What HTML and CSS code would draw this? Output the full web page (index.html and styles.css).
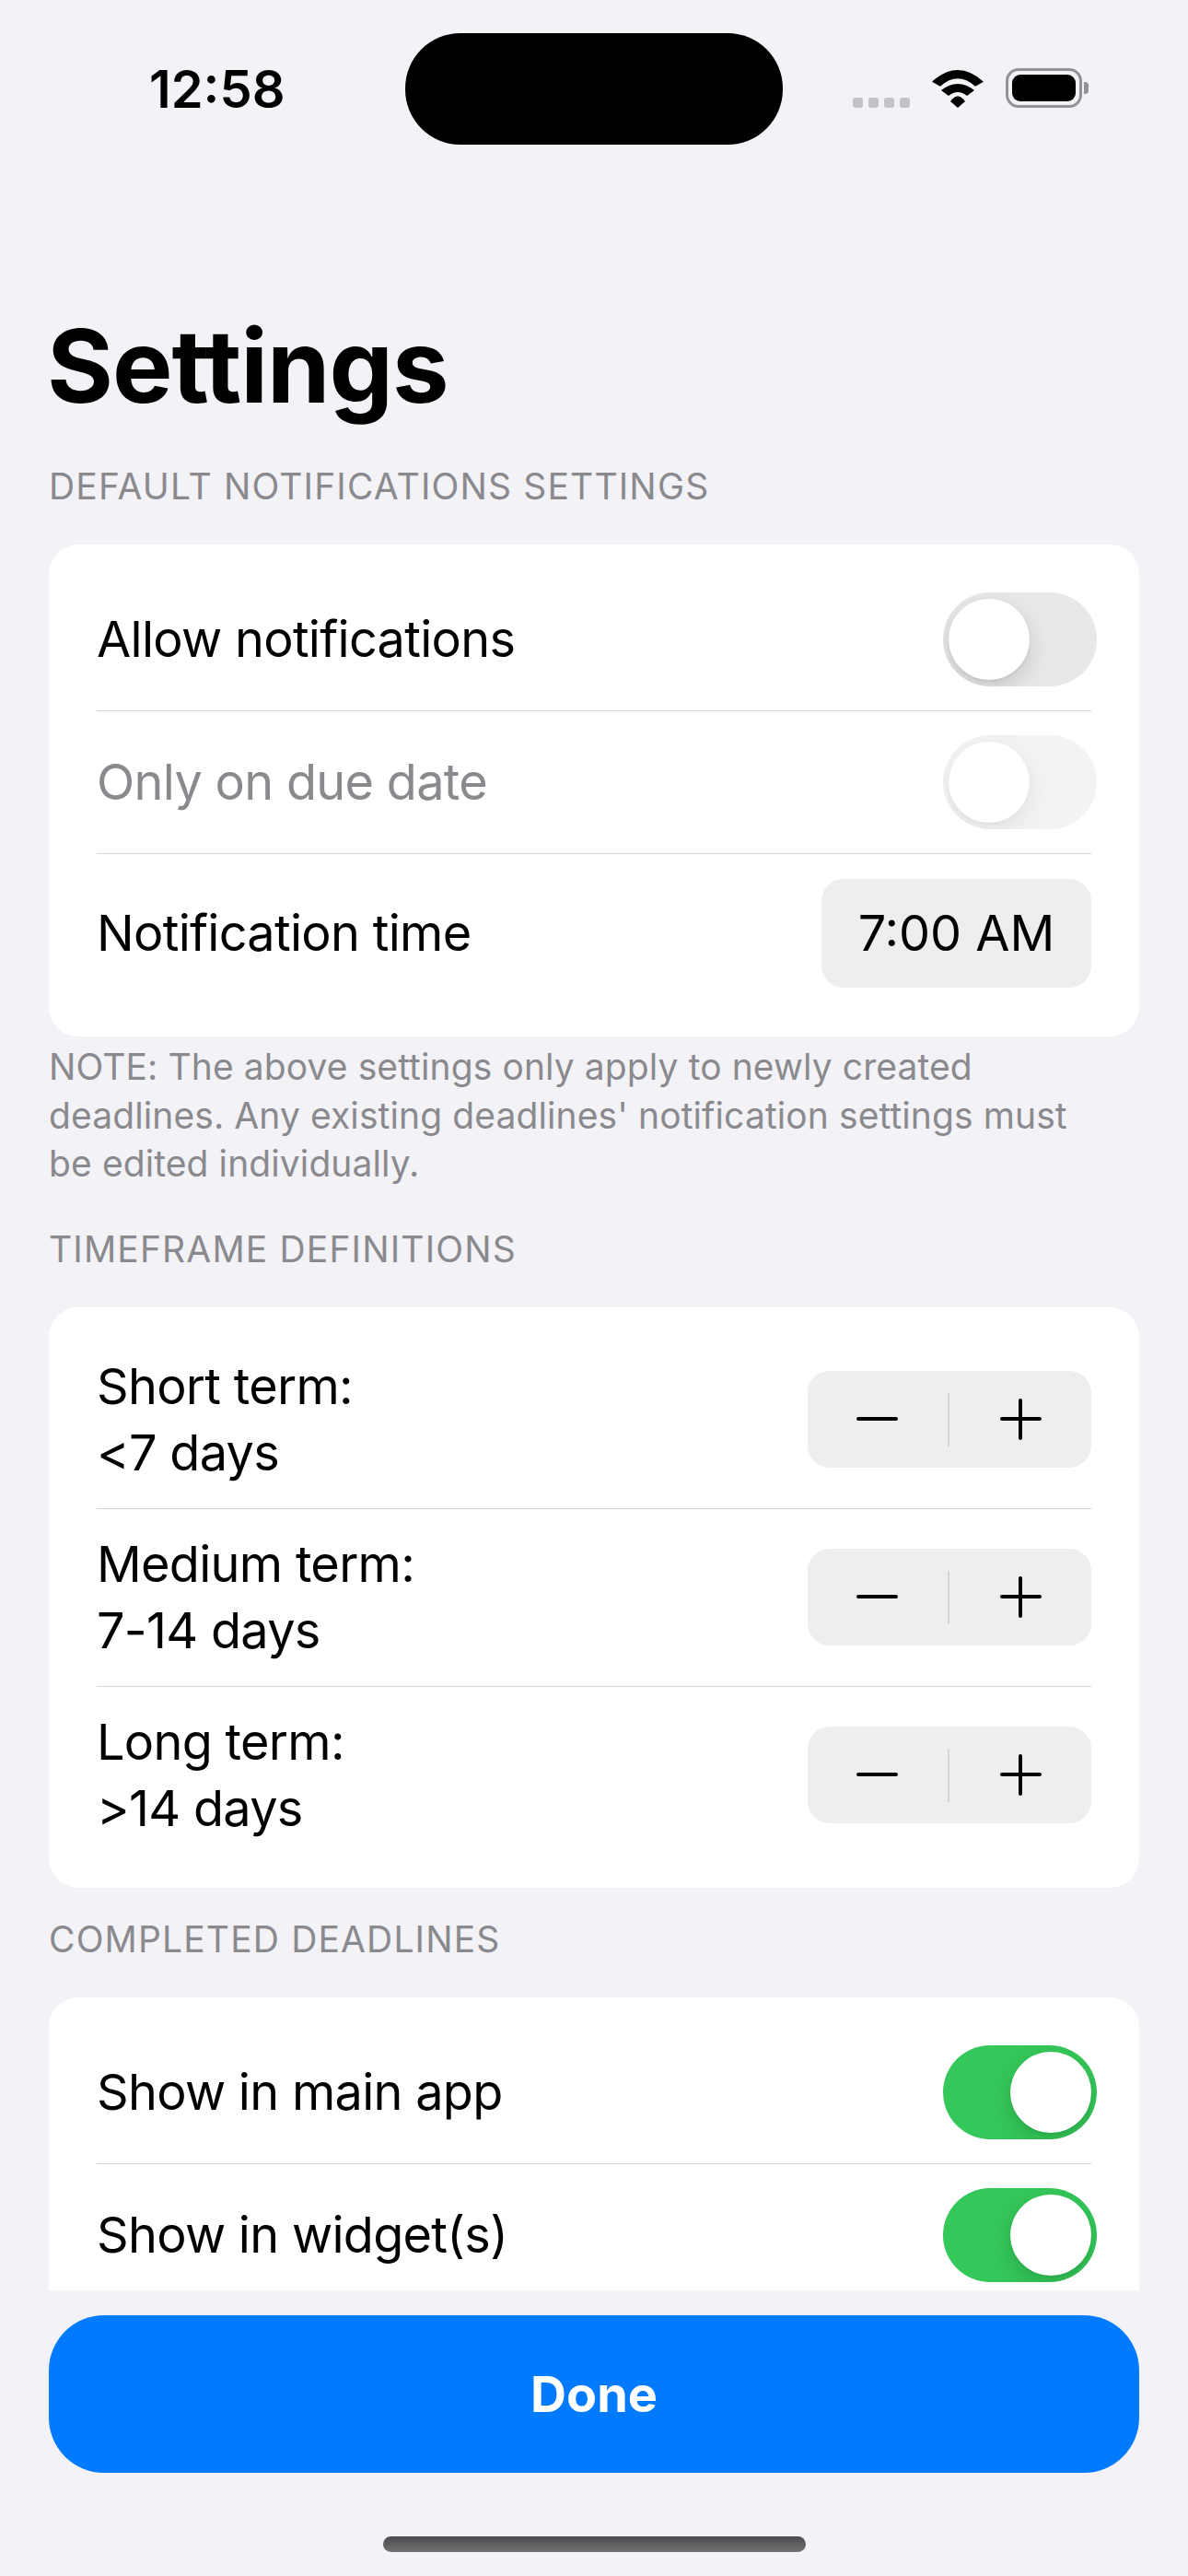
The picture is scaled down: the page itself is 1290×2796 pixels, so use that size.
FILE: index.html
```html
<!DOCTYPE html>
<html lang="en">

<head>
    <meta charset="UTF-8">
    <meta name="viewport" content="width=device-width, initial-scale=1.0">
    <title>Settings</title>
    <link rel="stylesheet" href="styles.css">
</head>

<body>
    <div class="phone">
        <div class="status-bar">
            <span class="time">12:58</span>
            <div class="island"></div>
            <div class="status-icons">
                <div class="signal"><i></i><i></i><i></i><i></i></div>
                <svg class="wifi" width="56" height="41" viewBox="0 0 56 41">
                    <path d="M0 12.7Q28 -12.7 56 12.7L47 17.7Q28 0.9 9 17.7Z" />
                    <path d="M10 22Q28 8 46 22L38 28Q28 20 18 28Z" />
                    <path d="M20 34Q28 23 36 34L28 41Z" />
                </svg>
                <div class="battery"><div class="battery-level"></div></div>
                <div class="battery-nub"></div>
            </div>
        </div>

        <main class="scroll">
            <h1>Settings</h1>

            <section>
                <h2>DEFAULT NOTIFICATIONS SETTINGS</h2>
                <div class="card">
                    <div class="row">
                        <span>Allow notifications</span>
                        <div class="toggle"><div class="thumb"></div></div>
                    </div>
                    <div class="row disabled">
                        <span>Only on due date</span>
                        <div class="toggle"><div class="thumb"></div></div>
                    </div>
                    <div class="row">
                        <span>Notification time</span>
                        <div class="time-btn">7:00 AM</div>
                    </div>
                </div>
                <p class="note">NOTE: The above settings only apply to newly created deadlines. Any existing deadlines' notification settings must be edited individually.</p>
            </section>

            <section>
                <h2>TIMEFRAME DEFINITIONS</h2>
                <div class="card">
                    <div class="row tall">
                        <span>Short term:<br>&lt;7 days</span>
                        <div class="stepper">
                            <div class="step"><div class="minus"></div></div>
                            <div class="step"><div class="plus"></div></div>
                        </div>
                    </div>
                    <div class="row tall">
                        <span>Medium term:<br>7-14 days</span>
                        <div class="stepper">
                            <div class="step"><div class="minus"></div></div>
                            <div class="step"><div class="plus"></div></div>
                        </div>
                    </div>
                    <div class="row tall">
                        <span>Long term:<br>&gt;14 days</span>
                        <div class="stepper">
                            <div class="step"><div class="minus"></div></div>
                            <div class="step"><div class="plus"></div></div>
                        </div>
                    </div>
                </div>
            </section>

            <section>
                <h2>COMPLETED DEADLINES</h2>
                <div class="card">
                    <div class="row">
                        <span>Show in main app</span>
                        <div class="toggle on"><div class="thumb"></div></div>
                    </div>
                    <div class="row">
                        <span>Show in widget(s)</span>
                        <div class="toggle on"><div class="thumb"></div></div>
                    </div>
                </div>
            </section>
        </main>

        <footer>
            <button type="button" class="done">Done</button>
            <div class="home-bar"></div>
        </footer>
    </div>
</body>

</html>
```

FILE: styles.css
```css
body {
    margin: 0;
    padding: 0;
    background-color: #f2f2f7;
    font-family: Inter, "Liberation Sans", sans-serif;
    color: #000;
}

.phone {
    width: 1290px;
    height: 2796px;
    display: flex;
    flex-direction: column;
    overflow: hidden;
}

/* status bar */
.status-bar {
    flex: none;
    display: flex;
    align-items: center;
    height: 121px;
    padding: 36px 0 0 162px;
}

.time {
    width: 278px;
    font-size: 56px;
    font-weight: 600;
}

.island {
    width: 410px;
    height: 121px;
    border-radius: 60px;
    background-color: #000;
}

.status-icons {
    display: flex;
    align-items: flex-end;
    margin-left: 76px;
    height: 43px;
    margin-top: -2px;
}

.signal {
    display: flex;
    gap: 6px;
    margin-right: 24px;
}

.signal i {
    display: block;
    width: 11px;
    height: 11px;
    border-radius: 3px;
    background-color: #c3c3c7;
}

.wifi {
    display: block;
    margin-right: 24px;
}

.battery {
    box-sizing: border-box;
    width: 83px;
    height: 43px;
    padding: 4px;
    border: 3px solid #939397;
    border-radius: 14px;
}

.battery-level {
    height: 100%;
    border-radius: 9px;
    background-color: #000;
}

.battery-nub {
    width: 5px;
    height: 13px;
    margin: 0 0 15px 2px;
    border-radius: 0 4px 4px 0;
    background-color: #939397;
}

/* content */
.scroll {
    flex: 1;
    min-height: 0;
    overflow: hidden;
    padding: 0 53px;
}

h1 {
    margin: 175px 0 40px -2px;
    font-size: 110px;
    line-height: 130px;
    font-weight: 700;
    letter-spacing: -1px;
}

section {
    margin-bottom: 30px;
}

h2 {
    margin: 0 0 37px;
    font-size: 39px;
    line-height: 52px;
    font-weight: 400;
    letter-spacing: 1.15px;
    color: #8a8a8e;
}

.card {
    padding: 26px 52px;
    background: white;
    border-radius: 32px;
}

.row {
    display: flex;
    align-items: center;
    justify-content: space-between;
    padding: 26px 0;
    border-bottom: 1px solid #d4d4d6;
    font-size: 54px;
    line-height: 72px;
    letter-spacing: -0.7px;
}

.row:last-child {
    border-bottom: none;
}

.row.tall {
    padding: 24px 0;
}

.row.disabled span {
    color: #8a8a8e;
}

.note {
    margin: 7px 0 40px;
    padding-right: 50px;
    font-size: 39px;
    line-height: 52.7px;
    letter-spacing: 0.1px;
    color: #8a8a8e;
}

/* toggles */
.toggle {
    box-sizing: border-box;
    display: flex;
    width: 167px;
    height: 102px;
    margin-right: -6px;
    padding: 7px 6px;
    border-radius: 51px;
    background-color: #e8e8ea;
    overflow: hidden;
}

.toggle.on {
    justify-content: flex-end;
    background-color: #34c759;
}

.row.disabled .toggle {
    opacity: 0.5;
}

.thumb {
    width: 88px;
    height: 88px;
    border-radius: 50%;
    background: white;
    box-shadow: 0 9px 24px rgba(0, 0, 0, 0.15), 0 2px 3px rgba(0, 0, 0, 0.06);
}

.time-btn {
    box-sizing: border-box;
    width: 293px;
    height: 118px;
    margin: 1px 0;
    border-radius: 24px;
    background-color: #eeeeef;
    font-size: 54px;
    line-height: 118px;
    letter-spacing: 0;
    text-align: center;
}

/* steppers */
.stepper {
    display: flex;
    width: 308px;
    height: 105px;
    margin-top: -2px;
    border-radius: 24px;
    background-color: #eeeeef;
}

.step {
    flex: 1;
    display: flex;
    align-items: center;
    justify-content: center;
}

.step:first-child {
    position: relative;
}

.step:first-child::after {
    content: "";
    position: absolute;
    right: 0;
    top: 24px;
    height: 58px;
    border-right: 2px solid #d6d6d8;
}

.minus,
.plus {
    position: relative;
    width: 45px;
    height: 4px;
    background-color: #000;
    border-radius: 2px;
}

.minus {
    margin-right: 3px;
}

.plus::after {
    content: "";
    position: absolute;
    left: 20.5px;
    top: -20.5px;
    width: 4px;
    height: 45px;
    background-color: #000;
    border-radius: 2px;
}

/* footer */
footer {
    flex: none;
    height: 310px;
    box-sizing: border-box;
    padding: 27px 53px 0;
    display: flex;
    flex-direction: column;
    align-items: center;
}

.done {
    width: 100%;
    height: 171px;
    border: none;
    border-radius: 60px;
    background-color: #007aff;
    color: white;
    font-family: inherit;
    font-size: 54px;
    font-weight: 700;
    cursor: pointer;
}

.home-bar {
    width: 459px;
    height: 17px;
    margin-top: 69px;
    border-radius: 9px;
    background: linear-gradient(#4a4a4c, #727275);
}
```
